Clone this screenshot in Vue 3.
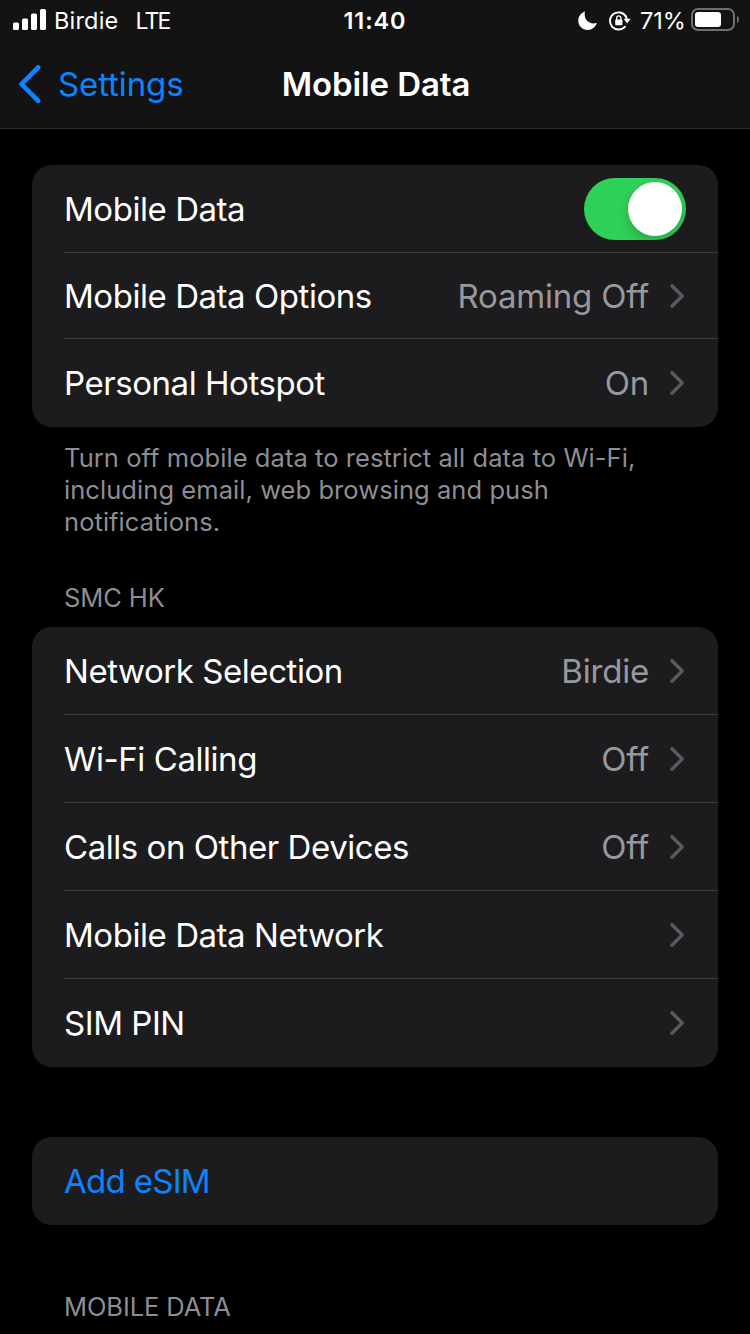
<script setup>
import { ref } from 'vue';

const mobileData = ref(true);

const dataRows = [
  { label: 'Mobile Data', toggle: true },
  { label: 'Mobile Data Options', value: 'Roaming Off' },
  { label: 'Personal Hotspot', value: 'On' }
];

const simRows = [
  { label: 'Network Selection', value: 'Birdie' },
  { label: 'Wi-Fi Calling', value: 'Off' },
  { label: 'Calls on Other Devices', value: 'Off' },
  { label: 'Mobile Data Network' },
  { label: 'SIM PIN' }
];
</script>

<template>
  <div class="screen">
    <header class="top">
      <div class="status-bar">
        <div class="status-left">
          <svg class="signal" width="34" height="22" viewBox="0 0 34 22" fill="#fff">
            <rect x="0" y="13.5" width="6" height="7.5" rx="1.6" />
            <rect x="9" y="9.5" width="6" height="11.5" rx="1.6" />
            <rect x="18" y="4.5" width="6" height="16.5" rx="1.6" />
            <rect x="27" y="0" width="6" height="21" rx="1.6" />
          </svg>
          <span class="carrier">Birdie</span>
          <span class="network">LTE</span>
        </div>
        <span class="clock">11:40</span>
        <div class="status-right">
          <svg class="moon" width="20" height="20" viewBox="0 0 20 20" fill="#fff">
            <path d="M7 .6C6.700 1.800 6.600 2.900 6.700 4c.4 5 4 8.300 8.700 8.400 1.300 0 2.400-.2 3.500-.6C17.500 16 13.900 19 9.800 19 4.500 19 .3 14.900 .3 9.700 .3 5.500 3 1.900 7 .6z" />
          </svg>
          <svg class="lock" width="22" height="20" viewBox="0 0 22 20">
            <path d="M16.900 5.400A8.600 8.600 0 1 0 16 15.700" fill="none" stroke="#fff" stroke-width="1.9" stroke-linecap="round" />
            <path d="M14.600 7.800h7L18.100 12.600z" fill="#fff" />
            <path d="M16.500 4.600l1.500 4" stroke="#fff" stroke-width="1.9" />
            <rect x="6.200" y="8.400" width="7.200" height="5.800" rx="0.8" fill="#fff" />
            <path d="M7.700 9V7a2.100 2.100 0 0 1 4.200 0V9" fill="none" stroke="#fff" stroke-width="1.4" />
          </svg>
          <span class="percent">71%</span>
          <svg class="battery" width="49" height="24" viewBox="0 0 49 24">
            <rect x="1" y="1" width="42" height="21" rx="6" fill="none" stroke="#6f6f6f" stroke-width="2" />
            <rect x="4" y="4" width="26" height="15" rx="3" fill="#fff" />
            <path d="M46 7.800c1.300.7 2 2 2 3.700s-.7 3-2 3.700z" fill="#6f6f6f" />
          </svg>
        </div>
      </div>
      <nav class="nav-bar">
        <a class="back">
          <svg width="24" height="40" viewBox="0 0 24 40" fill="none" stroke="#0a84ff" stroke-width="4.6" stroke-linecap="round" stroke-linejoin="round">
            <path d="M20.200 3.500L3.500 20.200 20.200 36.900" />
          </svg>
          <span>Settings</span>
        </a>
        <h1>Mobile Data</h1>
      </nav>
    </header>

    <main>
      <ul class="card compact">
        <li v-for="row in dataRows" :key="row.label" class="row">
          <span class="label">{{ row.label }}</span>
          <button
            v-if="row.toggle"
            class="switch"
            :class="{ on: mobileData }"
            aria-label="Mobile Data"
            @click="mobileData = !mobileData"
          ><i class="knob"></i></button>
          <template v-else>
            <span class="value">{{ row.value }}</span>
            <svg class="chevron" width="18" height="26" viewBox="0 0 18 26">
              <path d="M4 2.800L14.200 13 4 23.200" />
            </svg>
          </template>
        </li>
      </ul>
      <p class="footnote">
        Turn off mobile data to restrict all data to Wi-Fi,<br />
        including email, web browsing and push<br />
        notifications.
      </p>

      <h2 class="section sim">SMC HK</h2>
      <ul class="card">
        <li v-for="row in simRows" :key="row.label" class="row">
          <span class="label">{{ row.label }}</span>
          <span class="value">{{ row.value }}</span>
          <svg class="chevron" width="18" height="26" viewBox="0 0 18 26">
            <path d="M4 2.800L14.200 13 4 23.200" />
          </svg>
        </li>
      </ul>

      <ul class="card esim">
        <li class="row"><a class="label link">Add eSIM</a></li>
      </ul>

      <h2 class="section usage">MOBILE DATA</h2>
    </main>
  </div>
</template>

<style>
body {
  margin: 0;
  background: #000;
}
</style>

<style scoped>
.screen {
  width: 750px;
  height: 1334px;
  overflow: hidden;
  background: #000;
  color: #fff;
  font-family: Inter, "Liberation Sans", sans-serif;
}

.top {
  box-sizing: border-box;
  height: 129px;
  background: #131313;
  border-bottom: 1px solid #2b2b2b;
}

.status-bar {
  display: grid;
  grid-template-columns: 1fr auto 1fr;
  height: 40px;
  line-height: 40px;
  font-size: 23.5px;
}

.status-left,
.status-right {
  display: flex;
  align-items: center;
  height: 40px;
}

.carrier,
.network,
.clock,
.percent {
  padding-top: 2px;
  line-height: 38px;
}

.status-left {
  padding-left: 13px;
}

.signal {
  margin-right: 7px;
}

.carrier {
  margin-right: 17px;
  letter-spacing: 0.2px;
}

.network {
  font-size: 23px;
  letter-spacing: -1.8px;
}

.clock {
  font-weight: 600;
  letter-spacing: 0.9px;
}

.status-right {
  justify-content: flex-end;
  padding-right: 10px;
}

.moon {
  margin-top: 2px;
}

.lock {
  margin-left: 11px;
  margin-top: 1px;
}

.percent {
  margin-left: 9px;
  width: 45px;
  letter-spacing: 0;
}

.battery {
  margin-left: 6px;
}

.nav-bar {
  display: grid;
  grid-template-columns: 1fr auto 1fr;
  align-items: center;
  height: 88px;
}

.back {
  display: flex;
  align-items: center;
  padding-left: 18px;
  gap: 16px;
  color: #0a84ff;
  font-size: 33px;
  letter-spacing: -0.1px;
}

h1 {
  margin: 0;
  padding-left: 2px;
  font-size: 33px;
  font-weight: 600;
  letter-spacing: -0.1px;
}

main {
  padding: 36px 32px 0;
}

.card {
  margin: 0;
  padding: 0;
  list-style: none;
  border-radius: 20px;
  background: #1c1c1e;
  overflow: hidden;
}

.row {
  display: flex;
  align-items: center;
  box-sizing: border-box;
  height: 88px;
  margin-left: 32px;
  padding-right: 32px;
  border-bottom: 1px solid #3d3d40;
  font-size: 33px;
}

.compact .row:nth-child(2) {
  height: 86px;
}

.row:last-child {
  border-bottom: none;
}

.label {
  flex: 1;
  letter-spacing: -0.45px;
}

.link {
  color: #0a84ff;
  letter-spacing: -0.7px;
}

.value {
  color: #98989f;
  letter-spacing: -0.2px;
}

.chevron {
  margin-left: 20px;
  margin-right: -1px;
  transform: translateX(-1px);
  fill: none;
  stroke: #5a5a5e;
  stroke-width: 3.5;
  stroke-linecap: round;
  stroke-linejoin: round;
}

.switch {
  display: flex;
  justify-content: flex-start;
  box-sizing: border-box;
  width: 102px;
  height: 62px;
  padding: 4px;
  border: none;
  border-radius: 31px;
  background: #39393d;
}

.switch.on {
  justify-content: flex-end;
  background: #30d158;
}

.knob {
  width: 54px;
  height: 54px;
  border-radius: 50%;
  background: #fff;
  box-shadow: 0 5px 12px rgba(0, 0, 0, 0.2);
}

.footnote {
  margin: 15px 0 0 32px;
  color: #8d8d93;
  font-size: 25.5px;
  line-height: 32px;
  letter-spacing: 0.06px;
}

.section {
  margin: 0 0 0 32px;
  color: #8d8d93;
  font-size: 25.5px;
  font-weight: 400;
  line-height: 32px;
  letter-spacing: -0.1px;
}

.sim {
  margin-top: 44px;
  margin-bottom: 13px;
}

.esim {
  margin-top: 70px;
}

.usage {
  margin-top: 66px;
}
</style>
